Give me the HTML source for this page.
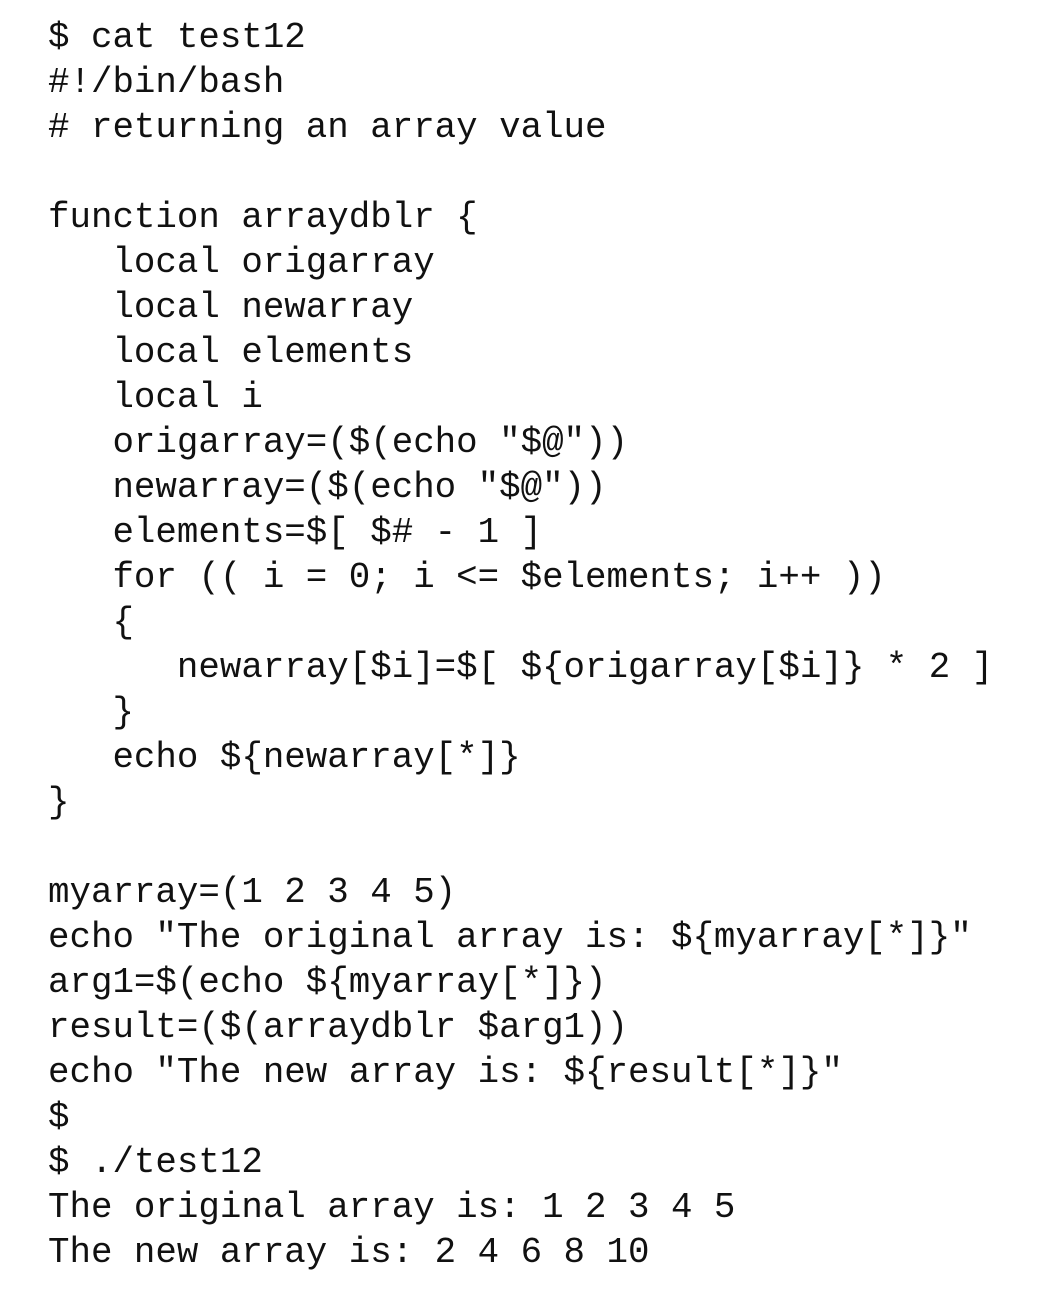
<!DOCTYPE html>
<html><head><meta charset="utf-8"><style>
html,body{margin:0;padding:0;background:#fff;width:1056px;height:1314px;overflow:hidden}
pre{margin:0;position:absolute;left:48px;top:15px;font-family:"Liberation Mono",monospace;font-size:35.8px;line-height:45px;color:#111}
</style></head><body><pre>$ cat test12
#!/bin/bash
# returning an array value

function arraydblr {
   local origarray
   local newarray
   local elements
   local i
   origarray=($(echo "$@"))
   newarray=($(echo "$@"))
   elements=$[ $# - 1 ]
   for (( i = 0; i &lt;= $elements; i++ ))
   {
      newarray[$i]=$[ ${origarray[$i]} * 2 ]
   }
   echo ${newarray[*]}
}

myarray=(1 2 3 4 5)
echo "The original array is: ${myarray[*]}"
arg1=$(echo ${myarray[*]})
result=($(arraydblr $arg1))
echo "The new array is: ${result[*]}"
$
$ ./test12
The original array is: 1 2 3 4 5
The new array is: 2 4 6 8 10</pre></body></html>
